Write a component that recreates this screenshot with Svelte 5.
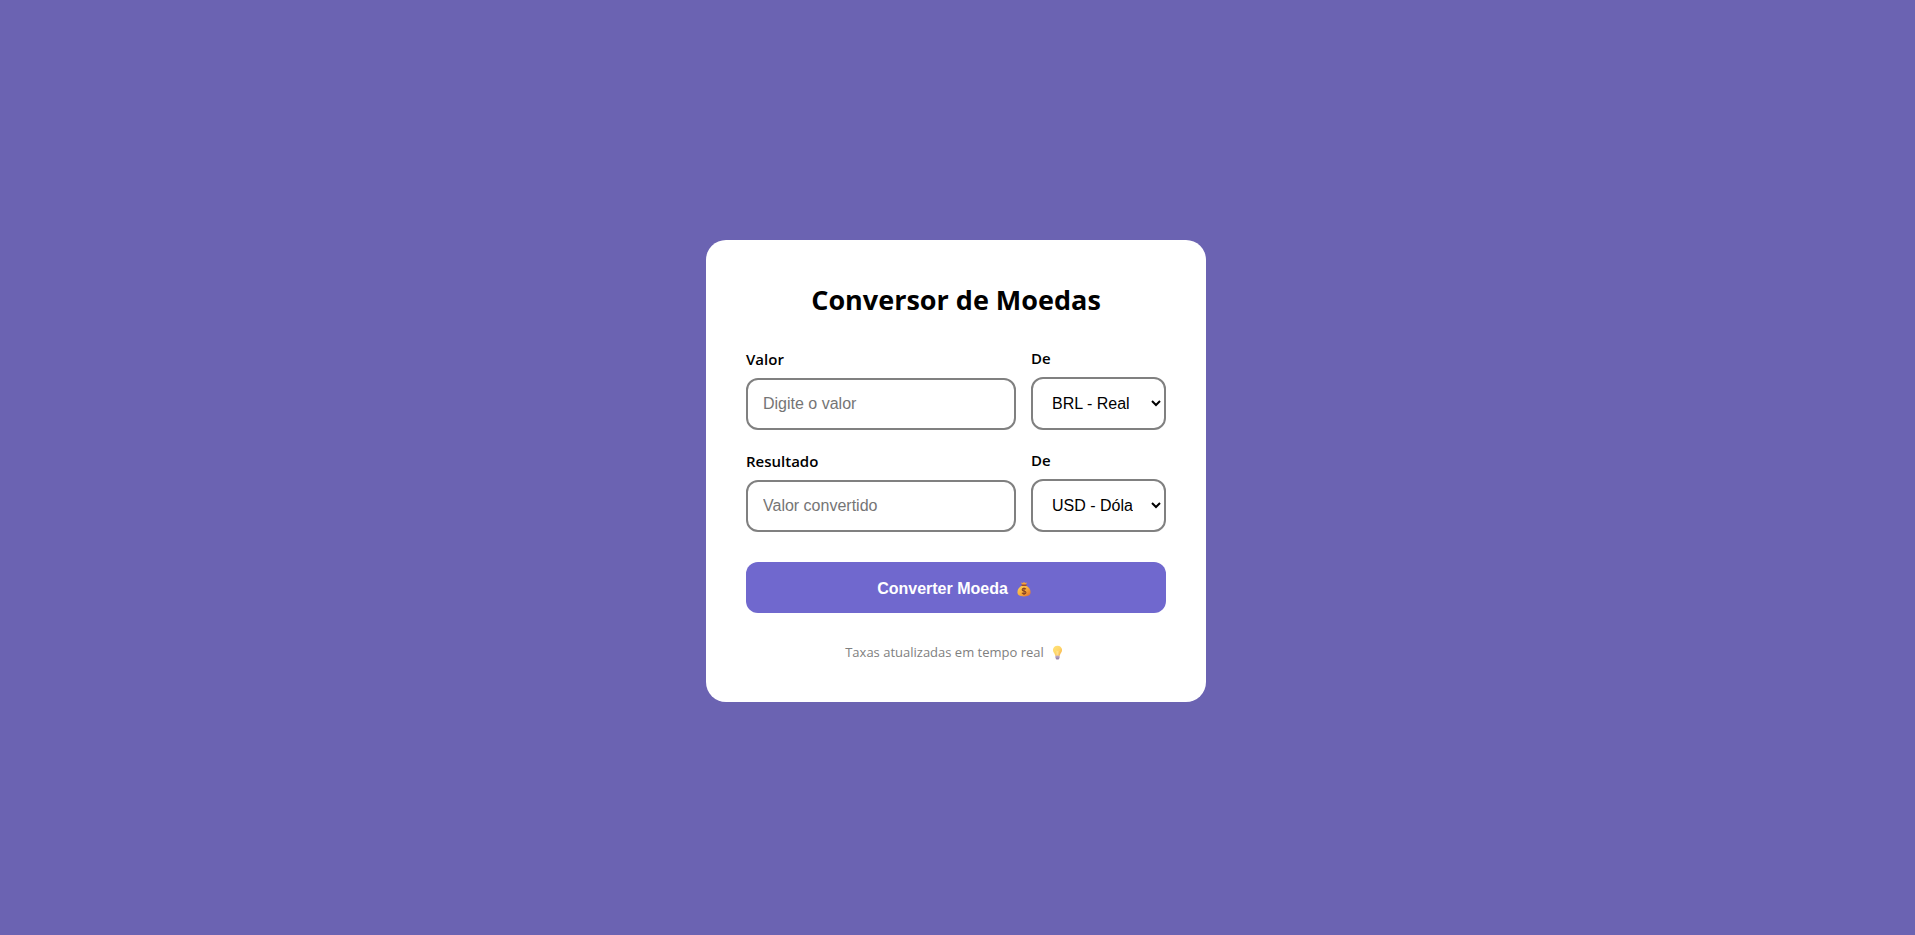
<script>
  let amount = '';
  let result = '';
  let from = 'BRL';
  let to = 'USD';

  const currencies = [
    { code: 'BRL', name: 'Real' },
    { code: 'USD', name: 'Dólar' },
    { code: 'EUR', name: 'Euro' }
  ];

  // value of one unit of each currency, in reais
  const rates = { BRL: 1, USD: 5.4, EUR: 6.3 };

  function convert() {
    const value = parseFloat(amount);
    if (isNaN(value)) {
      result = '';
      return;
    }
    result = ((value * rates[from]) / rates[to]).toFixed(2);
  }
</script>

<main class="page">
  <form class="card" on:submit|preventDefault={convert}>
    <h1>Conversor de Moedas</h1>

    <div class="row">
      <div class="field">
        <label for="amount">Valor</label>
        <input id="amount" type="text" inputmode="decimal" placeholder="Digite o valor" bind:value={amount} />
      </div>
      <div class="field">
        <label for="from">De</label>
        <select id="from" bind:value={from}>
          {#each currencies as currency}
            <option value={currency.code}>{currency.code} - {currency.name}</option>
          {/each}
        </select>
      </div>
    </div>

    <div class="row">
      <div class="field">
        <label for="result">Resultado</label>
        <input id="result" type="text" placeholder="Valor convertido" readonly value={result} />
      </div>
      <div class="field">
        <label for="to">De</label>
        <select id="to" bind:value={to}>
          {#each currencies as currency}
            <option value={currency.code}>{currency.code} - {currency.name}</option>
          {/each}
        </select>
      </div>
    </div>

    <button class="convertBtn" type="submit">
      Converter Moeda
      <svg class="bagIcon" viewBox="0 0 16 18" aria-hidden="true">
        <defs>
          <linearGradient id="bag" x1="0" y1="0" x2="1" y2="1">
            <stop offset="0" stop-color="#ffd45a" />
            <stop offset="0.5" stop-color="#f9ae3b" />
            <stop offset="1" stop-color="#dd6b2c" />
          </linearGradient>
        </defs>
        <path d="M4.5 1.5 6.5 2.2 8 1 9.5 2.2 11.5 1.5 10 4.5H6z" fill="#f3a13c" />
        <path d="M6 5h4c3.400 1.500 5.500 4.500 5.500 7.500 0 3.500-2.200 5-7.500 5s-7.500-1.500-7.500-5c0-3 2.100-6 5.500-7.500z" fill="url(#bag)" />
        <rect x="5" y="3.8" width="6" height="1.7" rx="0.8" fill="#9a4b32" />
        <path d="M10.200 9.300c-.5-.8-1.200-1-2.200-1-1.300 0-2.100.6-2.100 1.500 0 2.100 4.300 1 4.300 3.200 0 1-.8 1.600-2.200 1.600-1.100 0-1.900-.4-2.300-1.200M8 7.300v8.500" fill="none" stroke="#874525" stroke-width="1.3" />
      </svg>
    </button>

    <p class="note">
      Taxas atualizadas em tempo real
      <svg class="bulbIcon" viewBox="0 0 12 16" aria-hidden="true">
        <defs>
          <linearGradient id="bulb" x1="0" y1="0" x2="1" y2="1">
            <stop offset="0" stop-color="#ffe37a" />
            <stop offset="0.5" stop-color="#ffd76a" />
            <stop offset="1" stop-color="#f6ad4a" />
          </linearGradient>
        </defs>
        <path d="M6 .5c3 0 5 2 5 4.800 0 2.300-2 3.400-2.500 6.200h-5C3 8.700 1 7.600 1 5.300 1 2.500 3 .5 6 .5z" fill="url(#bulb)" />
        <path d="M4.500 6 5.500 7v4.500M7.500 6 6.500 7v4.500" fill="none" stroke="#fff0b0" stroke-width="0.7" />
        <path d="M3.800 11.500h4.400v2.500L7.200 15.500H4.800L3.800 14z" fill="#9b86ad" />
        <path d="M3.800 12.800h4.400" stroke="#d8cce2" stroke-width="0.7" />
      </svg>
    </p>
  </form>
</main>

<style>
  :global(body) {
    margin: 0;
    background: #6b63b2;
  }
  .page {
    min-height: 100vh;
    padding: 7px 3px 0 0;
    display: flex;
    align-items: center;
    justify-content: center;
    box-sizing: border-box;
    font-family: 'Segoe UI', 'Open Sans', sans-serif;
  }
  .card {
    width: 100%;
    max-width: 500px;
    padding: 40px;
    box-sizing: border-box;
    border-radius: 20px;
    background: white;
  }
  h1 {
    margin: 0 0 28px;
    font-size: 27px;
    line-height: 40px;
    text-align: center;
    color: black;
  }
  .row {
    display: grid;
    grid-template-columns: 2fr 1fr;
    align-items: end;
    gap: 15px;
    margin-bottom: 20px;
  }
  .field {
    display: flex;
    flex-direction: column;
    gap: 8px;
    min-width: 0;
  }
  label {
    font-size: 15px;
    line-height: 21px;
    font-weight: 600;
    color: black;
  }
  input,
  select {
    width: 100%;
    height: 52px;
    padding: 15px;
    box-sizing: border-box;
    border: 2px solid gray;
    border-radius: 12px;
    background: white;
    color: black;
    font-family: Arial, 'Liberation Sans', sans-serif;
    font-size: 16px;
  }
  select {
    height: 53px;
  }
  input::placeholder {
    color: #757575;
  }
  .convertBtn {
    display: flex;
    align-items: center;
    justify-content: center;
    gap: 9px;
    width: 100%;
    height: 51px;
    margin-top: 30px;
    padding: 3px 0 0;
    border: none;
    border-radius: 12px;
    background: #7068ce;
    color: white;
    font-family: Arial, 'Liberation Sans', sans-serif;
    font-size: 16px;
    font-weight: bold;
    cursor: pointer;
  }
  .bagIcon {
    width: 14px;
    height: 16px;
    margin-right: 4px;
  }
  .note {
    display: flex;
    align-items: center;
    justify-content: center;
    gap: 8px;
    margin: 30px 0 0;
    font-size: 13px;
    line-height: 19px;
    color: gray;
  }
  .bulbIcon {
    width: 11px;
    height: 15px;
    margin-right: 4px;
  }
</style>
